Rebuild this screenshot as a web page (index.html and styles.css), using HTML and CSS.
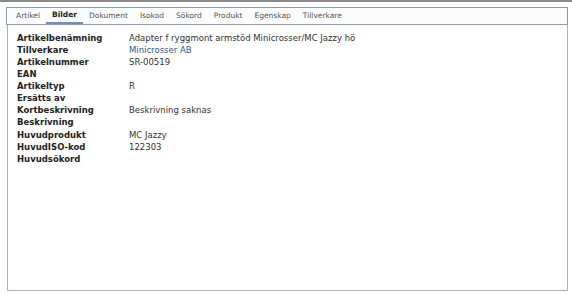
FILE: index.html
```html
<!DOCTYPE html>
<html lang="sv">
<head>
    <meta charset="UTF-8">
    <title>Artikel</title>
    <link rel="stylesheet" href="styles.css">
</head>
<body>
    <div class="topline"></div>
    <div class="wrap">
        <div class="tabs">
            <a href="#">Artikel</a>
            <a href="#" class="active">Bilder</a>
            <a href="#">Dokument</a>
            <a href="#">Isokod</a>
            <a href="#">Sökord</a>
            <a href="#">Produkt</a>
            <a href="#">Egenskap</a>
            <a href="#">Tillverkare</a>
        </div>
        <div class="panel">
            <div class="group">
                <div class="row"><span class="label">Artikelbenämning</span><span class="value">Adapter f ryggmont armstöd Minicrosser/MC Jazzy hö</span></div>
                <div class="row"><span class="label">Tillverkare</span><a class="value link" href="#">Minicrosser AB</a></div>
                <div class="row"><span class="label">Artikelnummer</span><span class="value">SR-00519</span></div>
                <div class="row"><span class="label">EAN</span><span class="value"></span></div>
                <div class="row"><span class="label">Artikeltyp</span><span class="value">R</span></div>
                <div class="row"><span class="label">Ersätts av</span><span class="value"></span></div>
                <div class="row"><span class="label">Kortbeskrivning</span><span class="value">Beskrivning saknas</span></div>
                <div class="row"><span class="label">Beskrivning</span><span class="value"></span></div>
            </div>
            <div class="group">
                <div class="row"><span class="label">Huvudprodukt</span><span class="value">MC Jazzy</span></div>
                <div class="row"><span class="label">HuvudISO-kod</span><span class="value">122303</span></div>
                <div class="row"><span class="label">Huvudsökord</span><span class="value"></span></div>
            </div>
        </div>
    </div>
</body>
</html>
```

FILE: styles.css
```css
html, body {
    height: 100%;
    margin: 0;
    font-family: "DejaVu Sans", Verdana, sans-serif;
    background-color: #ffffff;
}

body {
    display: flex;
    flex-direction: column;
}

.topline {
    height: 2px;
    background-color: #8a8a8a;
}

.wrap {
    flex-grow: 1;
    display: flex;
    flex-direction: column;
    padding: 5px 4px 3px 6px;
}

.tabs {
    display: flex;
    height: 16px;
    border: 1px solid #8e9aa8;
    background-color: #fbfcfe;
    padding-left: 3px;
}

.tabs a {
    color: #555;
    text-decoration: none;
    font-size: 7.5px;
    padding: 0 6px;
    line-height: 15px;
    border-bottom: 1px solid transparent;
}

.tabs a.active {
    color: #222;
    font-weight: bold;
    border-bottom: 2px solid #6f8fb8;
    line-height: 14px;
}

.panel {
    flex-grow: 1;
    border: 1px solid #a7b3c2;
    border-top: none;
    margin-left: 1px;
    padding: 7px 9px;
}

.group {
    margin-bottom: 1px;
}

.row {
    display: flex;
    font-size: 8.5px;
    line-height: 12px;
    color: #222;
}

.label {
    width: 112px;
    font-weight: bold;
    flex-shrink: 0;
}

.value {
    color: #333;
}

.link {
    color: #2c5a9a;
    text-decoration: none;
}
```
